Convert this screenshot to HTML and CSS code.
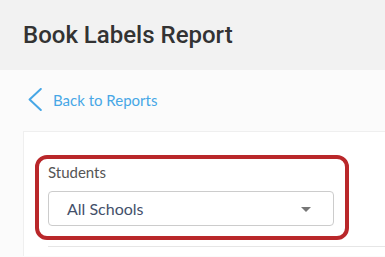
FILE: index.html
```html
<!DOCTYPE html>
<html lang="en">
<head>
<meta charset="utf-8">
<title>Book Labels Report</title>
<link rel="stylesheet" href="styles.css">
</head>
<body>
<header class="page-header">
  <h1 class="page-title">Book Labels Report</h1>
</header>
<main class="page-main">
  <a class="back-link" href="#">
    <svg class="back-icon" width="14" height="23" viewBox="0 0 14 23" aria-hidden="true">
      <path d="M12.8 1 L1.6 11.5 L12.8 22" fill="none" stroke="currentColor" stroke-width="2" stroke-linecap="round" stroke-linejoin="round"/>
    </svg>
    <span class="back-text">Back to Reports</span>
  </a>
  <section class="card">
    <div class="highlight">
      <label class="field-label">Students</label>
      <div class="select">
        <span class="select-value">All Schools</span>
        <span class="caret"></span>
      </div>
    </div>
    <div class="divider"></div>
  </section>
</main>
</body>
</html>
```
FILE: styles.css
```css
html, body {
  margin: 0;
  padding: 0;
  background: #fbfbfb;
}
body {
  font-family: "Lato", "Liberation Sans", sans-serif;
}
.page-header {
  height: 70px;
  background: #f2f2f2;
  display: flex;
  align-items: center;
  padding-left: 23px;
}
.page-title {
  margin: 0;
  font-family: "Roboto", "Liberation Sans", sans-serif;
  font-weight: 500;
  font-size: 24px;
  line-height: 1;
  color: #333333;
}
.page-main {
  padding: 18px 0 0 23px;
}
.back-link {
  display: flex;
  align-items: center;
  gap: 11px;
  margin-left: 5px;
  color: #47a7e6;
  text-decoration: none;
  height: 23px;
}
.back-icon {
  display: block;
  color: #47a7e6;
}
.back-text {
  font-size: 15px;
  line-height: 18px;
}
.card {
  margin-top: 20px;
  background: #ffffff;
  border-top: 1px solid #efefef;
  border-left: 1px solid #efefef;
  padding: 23px 0 9px 11px;
}
.highlight {
  box-sizing: border-box;
  width: 314px;
  border: 4px solid #b9272a;
  border-radius: 12px;
  padding: 4px 11px 10px 9px;
}
.field-label {
  display: block;
  font-size: 15px;
  line-height: 19px;
  color: #555555;
}
.select {
  margin-top: 9px;
  height: 33px;
  border: 1px solid #cccccc;
  border-radius: 4px;
  background: #ffffff;
  display: flex;
  align-items: center;
  justify-content: space-between;
  padding: 0 22px 0 18px;
}
.select-value {
  font-size: 16px;
  line-height: 19px;
  color: #44506a;
}
.caret {
  width: 0;
  height: 0;
  border-left: 5px solid transparent;
  border-right: 5px solid transparent;
  border-top: 5px solid #777777;
  margin-top: 1px;
}
.divider {
  margin: 6px 0 0 13px;
  height: 1px;
  background: #e6e6e6;
}
```
